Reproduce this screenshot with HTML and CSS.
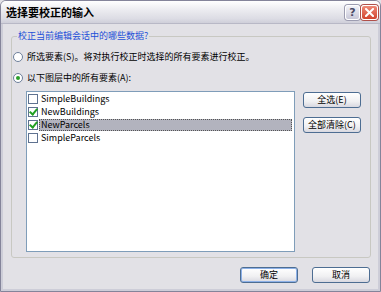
FILE: index.html
```html
<!DOCTYPE html>
<html lang="zh-CN">

<head>
    <meta charset="UTF-8">
    <title>选择要校正的输入</title>
    <link rel="stylesheet" href="styles.css">
</head>

<body>
    <div class="window">
        <div class="titlebar">
            <span class="title">选择要校正的输入</span>
            <div class="caption-btns">
                <span class="cap help">?</span>
                <span class="cap close">
                    <svg width="9" height="9" viewBox="0 0 9 9">
                        <path d="M1 1 L8 8 M8 1 L1 8" stroke="#fff" stroke-width="2" stroke-linecap="square" />
                    </svg>
                </span>
            </div>
        </div>

        <div class="client">
            <fieldset class="group">
                <legend>校正当前编辑会话中的哪些数据?</legend>

                <label class="opt">
                    <span class="radio"></span>
                    <span>所选要素(S)。将对执行校正时选择的所有要素进行校正。</span>
                </label>
                <label class="opt opt-layers">
                    <span class="radio on"></span>
                    <span>以下图层中的所有要素(A):</span>
                </label>

                <div class="layers">
                    <ul class="list">
                        <li><span class="check"></span><span class="name">SimpleBuildings</span></li>
                        <li><span class="check on"></span><span class="name">NewBuildings</span></li>
                        <li class="selected"><span class="check on"></span><span class="name">NewParcels</span></li>
                        <li><span class="check"></span><span class="name">SimpleParcels</span></li>
                    </ul>
                    <div class="side">
                        <button class="btn">全选(E)</button>
                        <button class="btn">全部清除(C)</button>
                    </div>
                </div>
            </fieldset>

            <div class="footer">
                <button class="btn default">确定</button>
                <button class="btn">取消</button>
            </div>
        </div>
    </div>
</body>

</html>
```

FILE: styles.css
```css
body {
    margin: 0;
    font-family: "Noto Sans CJK SC", "Noto Sans", sans-serif;
    font-size: 9px;
    color: #000;
    background: #e2e1e6;
}

.window {
    width: 381px;
    height: 292px;
    box-sizing: border-box;
    border: 1px solid #84849a;
    border-radius: 6px 6px 0 0;
    display: flex;
    flex-direction: column;
    background: #e2e1e6;
    overflow: hidden;
}

.titlebar {
    height: 23px;
    flex: none;
    display: flex;
    align-items: center;
    justify-content: space-between;
    padding: 0 2px 0 5px;
    background: linear-gradient(#ffffff, #eeeef2 35%, #dcdce4 80%, #cfcfd9);
    border-bottom: 1px solid #b8b8c6;
    box-sizing: border-box;
}

.title {
    font-size: 11px;
    font-weight: bold;
    line-height: 14px;
}

.caption-btns {
    display: flex;
    gap: 1px;
    margin-top: 1px;
}

.cap {
    height: 15px;
    box-sizing: border-box;
    border: 1px solid #fff;
    border-radius: 3px;
    display: flex;
    align-items: center;
    justify-content: center;
}

.help {
    width: 15px;
    background: linear-gradient(#f2f2f8, #c8c8d8);
    box-shadow: 0 0 0 1px #9c9cb0;
    color: #4a4a66;
    font-family: "DejaVu Sans", sans-serif;
    font-size: 11px;
    font-weight: bold;
}

.close {
    width: 17px;
    background: linear-gradient(#ee8a78, #d2442e);
    box-shadow: 0 0 0 1px #b0504a;
}

.client {
    flex: 1;
    display: flex;
    flex-direction: column;
    border: 2px solid #cdcdd8;
    border-top: none;
    padding: 6px 7px 0 8px;
}

.group {
    margin: 0;
    padding: 9px 0 5px 0;
    border: 1px solid #c8c8c2;
    border-radius: 3px;
}

.group legend {
    margin-left: 5px;
    padding: 0 1px;
    line-height: 12px;
    color: #1d4fd8;
}

.opt {
    display: flex;
    align-items: center;
    height: 12px;
    line-height: 12px;
    padding-left: 1px;
    gap: 4px;
}

.opt-layers {
    margin-top: 9px;
}

.radio {
    width: 10px;
    height: 10px;
    box-sizing: border-box;
    border: 1px solid #6d7f9b;
    border-radius: 50%;
    background: #fff;
    display: flex;
    align-items: center;
    justify-content: center;
}

.radio.on::after {
    content: "";
    width: 4px;
    height: 4px;
    border-radius: 50%;
    background: #2ba02b;
}

.layers {
    display: flex;
    margin-top: 7px;
    padding-left: 14px;
    gap: 8px;
}

.list {
    list-style: none;
    margin: 0;
    padding: 0 2px 0 1px;
    width: 269px;
    height: 161px;
    box-sizing: border-box;
    border: 1px solid #7f9db9;
    background: #fff;
}

.list li {
    height: 13px;
    display: flex;
    align-items: center;
    line-height: 12px;
}

.check {
    width: 10px;
    height: 10px;
    box-sizing: border-box;
    border: 1px solid #5f7290;
    background: #fff;
    flex: none;
    margin-right: 1px;
    position: relative;
}

.check.on::after {
    content: "";
    position: absolute;
    left: 2px;
    top: -1px;
    width: 3px;
    height: 6px;
    border: solid #22a022;
    border-width: 0 2px 2px 0;
    transform: rotate(40deg);
}

.name {
    flex: 1;
    padding-left: 2px;
    height: 12px;
    box-sizing: border-box;
}

.selected .name {
    background: #b2b3be;
    outline: 1px dotted #555;
    outline-offset: -1px;
}

.side {
    display: flex;
    flex-direction: column;
    gap: 9px;
    padding-top: 1px;
}

.btn {
    width: 58px;
    height: 16px;
    padding: 0;
    font-family: "Noto Sans CJK SC", "Noto Sans", sans-serif;
    font-size: 9px;
    line-height: 12px;
    color: #000;
    border: 1px solid #4d6d92;
    border-radius: 3px;
    background: linear-gradient(#ffffff, #f0f0f2 60%, #d8d8e0);
}

.btn.default {
    box-shadow: inset 0 0 0 1px #8cb0e8;
}

.footer {
    display: flex;
    justify-content: flex-end;
    gap: 14px;
    margin-top: 9px;
    padding-right: 1px;
}
```
